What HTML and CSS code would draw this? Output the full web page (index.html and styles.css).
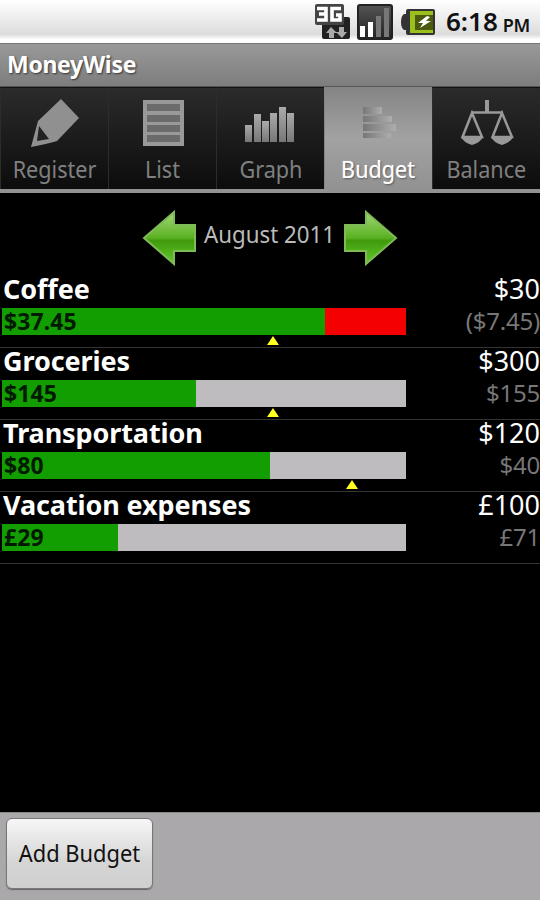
FILE: index.html
```html
<!DOCTYPE html>
<html lang="en">
<head>
    <meta charset="UTF-8">
    <meta name="viewport" content="width=device-width, initial-scale=1.0">
    <title>MoneyWise</title>
    <link rel="stylesheet" href="styles.css">
</head>
<body>
    <div class="status-bar">
        <svg class="icon-3g" width="36" height="36" viewBox="0 0 36 36">
            <rect x="7" y="13" width="28" height="22" rx="2" fill="#222"/>
            <rect x="0" y="0" width="29" height="21" rx="2" fill="#444"/>
            <path d="M2 4.500h9v11.500H2M4 10h7M26 4.500h-9v11.500h8v-5h-4" fill="none" stroke="#fff" stroke-width="3.600"/>
            <path d="M16 23l6 6h-3v5h-5v-5h-3zM27 34l-6-6h3v-5h5v5h3z" fill="#aaa"/>
        </svg>
        <svg class="icon-signal" width="36" height="36" viewBox="0 0 36 36">
            <defs>
                <linearGradient id="signalBg" x1="0" y1="0" x2="0" y2="1">
                    <stop offset="0" stop-color="#555"/>
                    <stop offset="1" stop-color="#222"/>
                </linearGradient>
            </defs>
            <rect x="1" y="1" width="34" height="34" rx="2" fill="url(#signalBg)" stroke="#222" stroke-width="2"/>
            <rect x="3" y="22" width="5" height="11" fill="#fff"/>
            <rect x="11" y="18" width="5" height="15" fill="#fff"/>
            <rect x="19" y="12" width="5" height="21" fill="#777"/>
            <rect x="27" y="4" width="5" height="29" fill="#777"/>
        </svg>
        <svg class="icon-battery" width="36" height="28" viewBox="0 0 36 28">
            <path d="M8 1h25q2 0 2 2v22q0 2-2 2H8q-2 0-2-2v-3H4q-3-2-3-8t3-8h2V3q0-2 2-2z" fill="#333"/>
            <path d="M10 3h23v4H16v15h17v3H10z" fill="#9bbf1c"/>
            <rect x="15" y="7" width="18" height="15" fill="#4c5a10"/>
            <path d="M27 8l-9 7h5l-3 5 11-7h-5l4-4z" fill="#fff"/>
        </svg>
        <span class="clock">6:18</span>
        <span class="ampm">PM</span>
    </div>

    <header>
        <h1>MoneyWise</h1>
    </header>

    <nav class="tabs">
        <a class="tab">
            <svg width="60" height="54" viewBox="0 0 60 54">
                <defs>
                    <linearGradient id="barFill" x1="0" y1="0" x2="0" y2="1">
                        <stop offset="0" stop-color="#aaa"/>
                        <stop offset="1" stop-color="#777"/>
                    </linearGradient>
                    <linearGradient id="budgetFill" x1="0" y1="0" x2="1" y2="0">
                        <stop offset="0" stop-color="#777"/>
                        <stop offset="1" stop-color="#adadad"/>
                    </linearGradient>
                </defs>
                <path d="M36 12l18 19-22 23q-10 3-26 6l7-26z" fill="#909090"/>
                <path d="M14 39l10 13-12 2z" fill="#222"/>
            </svg>
            <span>Register</span>
        </a>
        <a class="tab">
            <svg width="60" height="54" viewBox="0 0 60 54">
                <rect x="10" y="13" width="41" height="46" fill="#999"/>
                <g fill="#6b6b6b">
                    <rect x="14" y="17" width="33" height="7"/>
                    <rect x="14" y="28" width="33" height="7"/>
                    <rect x="14" y="38" width="33" height="7"/>
                    <rect x="14" y="48" width="33" height="7"/>
                </g>
            </svg>
            <span>List</span>
        </a>
        <a class="tab">
            <svg width="60" height="54" viewBox="0 0 60 54">
                <g fill="url(#barFill)">
                    <rect x="4" y="38" width="7" height="17"/>
                    <rect x="13" y="27" width="7" height="28"/>
                    <rect x="21" y="34" width="7" height="21"/>
                    <rect x="29" y="26" width="7" height="29"/>
                    <rect x="38" y="20" width="7" height="35"/>
                    <rect x="46" y="26" width="7" height="29"/>
                </g>
            </svg>
            <span>Graph</span>
        </a>
        <a class="tab active">
            <svg width="60" height="54" viewBox="0 0 60 54">
                <g fill="url(#budgetFill)">
                    <rect x="14" y="20" width="19" height="7"/>
                    <rect x="14" y="29" width="29" height="6"/>
                    <rect x="14" y="37" width="33" height="7"/>
                    <rect x="14" y="46" width="28" height="5"/>
                </g>
            </svg>
            <span>Budget</span>
        </a>
        <a class="tab">
            <svg width="60" height="54" viewBox="0 0 60 54">
                <g fill="none" stroke="#999" stroke-width="2.5">
                    <path d="M30 13v12" stroke-width="4"/>
                    <path d="M14 25.500h32"/>
                    <path d="M15 26L5.500 50h19.500zM45 26l-9.500 24H55z"/>
                </g>
                <path d="M4 50h22q-2 5-11 8-9-3-11-8zM34 50h22q-2 5-11 8-9-3-11-8z" fill="#999"/>
            </svg>
            <span>Balance</span>
        </a>
    </nav>

    <main>
        <div class="month">
            <svg width="54" height="56" viewBox="0 0 54 56">
                <defs>
                    <linearGradient id="arrowFill" x1="0" y1="0" x2="0" y2="1">
                        <stop offset="0" stop-color="#a4d878"/>
                        <stop offset=".5" stop-color="#59b022"/>
                        <stop offset=".55" stop-color="#409a0c"/>
                        <stop offset="1" stop-color="#63c92c"/>
                    </linearGradient>
                </defs>
                <path d="M2 28L32 2v13h21v26H32v13z" fill="url(#arrowFill)" stroke="#7fba58" stroke-width="2"/>
            </svg>
            <span>August 2011</span>
            <svg width="54" height="56" viewBox="0 0 54 56">
                <path d="M52 28L22 2v13H1v26h21v13z" fill="url(#arrowFill)" stroke="#7fba58" stroke-width="2"/>
            </svg>
        </div>

        <ul class="budgets">
            <li>
                <div class="name"><b>Coffee</b><span>$30</span></div>
                <div class="detail">
                    <div class="bar over">
                        <div class="fill" style="width: 80%">$37.45</div>
                        <i class="marker" style="left: 67.2%"></i>
                    </div>
                    <span class="left">($7.45)</span>
                </div>
            </li>
            <li>
                <div class="name"><b>Groceries</b><span>$300</span></div>
                <div class="detail">
                    <div class="bar">
                        <div class="fill" style="width: 48.1%">$145</div>
                        <i class="marker" style="left: 67.2%"></i>
                    </div>
                    <span class="left">$155</span>
                </div>
            </li>
            <li>
                <div class="name"><b>Transportation</b><span>$120</span></div>
                <div class="detail">
                    <div class="bar">
                        <div class="fill" style="width: 66.4%">$80</div>
                        <i class="marker" style="left: 86.7%"></i>
                    </div>
                    <span class="left">$40</span>
                </div>
            </li>
            <li>
                <div class="name"><b>Vacation expenses</b><span>£100</span></div>
                <div class="detail">
                    <div class="bar">
                        <div class="fill" style="width: 28.6%">£29</div>
                    </div>
                    <span class="left">£71</span>
                </div>
            </li>
        </ul>
    </main>

    <footer>
        <button type="button"><span>Add Budget</span></button>
    </footer>
</body>
</html>
```

FILE: styles.css
```css
* {
    box-sizing: border-box;
}
body {
    margin: 0;
    height: 900px;
    font-family: 'Noto Sans', 'Open Sans', sans-serif;
    background-color: #000;
    color: #fff;
    display: flex;
    flex-direction: column;
    overflow: hidden;
}
.status-bar {
    height: 43px;
    padding-right: 10px;
    background: linear-gradient(#fff, #f0f0f0 35%, #dcdcdc 80%, #fff 92%);
    color: #111;
    display: flex;
    justify-content: flex-end;
    align-items: center;
}
.icon-signal {
    margin-left: 6px;
}
.icon-battery {
    margin-left: 7px;
}
.clock {
    margin-left: 10px;
    font-size: 26px;
    font-weight: 600;
    line-height: 43px;
}
.ampm {
    margin: 7px 0 0 5px;
    font-size: 18px;
    font-weight: 600;
    line-height: 30px;
    letter-spacing: -0.3px;
}
header {
    height: 44px;
    padding-left: 7px;
    background: linear-gradient(#999, #7d7d7d);
    border-top: 1px solid #777;
    border-bottom: 1px solid #555;
}
h1 {
    margin: 0;
    font-size: 23px;
    font-weight: 700;
    line-height: 40px;
    letter-spacing: -0.3px;
    text-shadow: 1px 1px 2px #333;
}
.tabs {
    height: 106px;
    display: grid;
    grid-template-columns: repeat(5, 1fr);
    border-bottom: 4px solid #929292;
    margin-bottom: -1px;
}
.tab {
    display: flex;
    flex-direction: column;
    align-items: center;
    background: linear-gradient(#2b2b2b, #0c0c0c);
    border-left: 1px solid #2c2c2c;
    border-top: 1px solid #111;
    color: #808080;
    font-size: 24px;
    line-height: 30px;
}
.tab svg {
    overflow: visible;
    margin-top: -1px;
    margin-bottom: 13px;
}
/* narrower letters for the regular-weight labels */
.tab span {
    transform: scaleX(0.9);
}
.tab.active {
    background: linear-gradient(#858585, #a2a2a2 50%, #929292);
    border-color: #858585;
    color: #fff;
    text-shadow: 1px 1px 2px #555, 0 0 1px #fff;
}
main {
    flex: 1;
}
.month {
    height: 84px;
    display: flex;
    justify-content: center;
    align-items: center;
    gap: 8px;
    color: #bbb;
    font-size: 24px;
}
.month span {
    line-height: 30px;
    margin: -1px -5px 0;
    transform: scaleX(0.93);
}
.month svg {
    margin-top: 7px;
}
.budgets {
    list-style: none;
    margin: 0;
    padding: 0;
}
.budgets li {
    height: 72px;
    border-bottom: 1px solid #333;
}
.name {
    height: 32px;
    padding-left: 3px;
    display: flex;
    justify-content: space-between;
    font-size: 27px;
    line-height: 25px;
}
.name b {
    letter-spacing: -0.1px;
}
.detail {
    display: flex;
    justify-content: space-between;
    padding-left: 2px;
}
.bar {
    position: relative;
    width: 404px;
    height: 27px;
    background-color: #bfbcbf;
}
.bar.over {
    background-color: #f50000;
}
.fill {
    height: 100%;
    padding-left: 2px;
    background-color: #129e00;
    color: #001a00;
    font-size: 23px;
    font-weight: 700;
    line-height: 26px;
    letter-spacing: 0.1px;
}
.marker {
    position: absolute;
    top: 28px;
    margin-left: -6px;
    border: 6px solid transparent;
    border-top: 0;
    border-bottom: 9px solid #ff2;
}
.left {
    color: #777;
    font-size: 24px;
    line-height: 25px;
    letter-spacing: -0.2px;
}
footer {
    height: 88px;
    padding: 5px 6px;
    background-color: #aaa8aa;
    border-top: 1px solid #888;
}
button {
    width: 147px;
    height: 71px;
    padding: 0;
    border: 1px solid #777;
    border-radius: 6px;
    background: linear-gradient(#f7f7f7, #d6d6d6 60%, #cfcfcf);
    box-shadow: 0 1px 1px #666;
    color: #111;
    font-family: inherit;
    font-size: 24px;
}
button span {
    display: block;
    margin: -2px -10px 0;
    transform: scaleX(0.91);
}
```
